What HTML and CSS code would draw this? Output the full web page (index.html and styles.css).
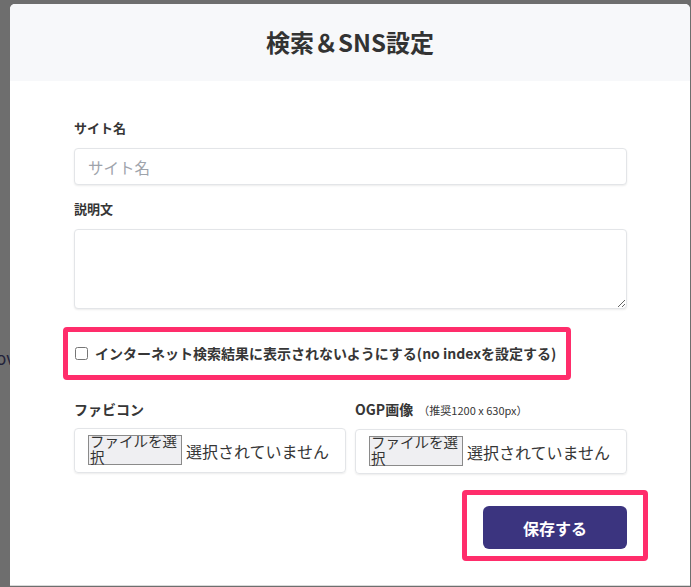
FILE: index.html
```html
<!DOCTYPE html>
<html lang="ja">
<head>
<meta charset="utf-8">
<title>検索＆SNS設定</title>
<link rel="stylesheet" href="styles.css">
</head>
<body>
<span class="behind">ov</span>
<div class="modal">
  <div class="modal-head">
    <h1 class="title">検索＆SNS設定</h1>
  </div>
  <div class="modal-body">
    <div class="field">
      <label class="label">サイト名</label>
      <input class="input" type="text" placeholder="サイト名">
    </div>
    <div class="field">
      <label class="label">説明文</label>
      <textarea class="textarea"></textarea>
    </div>
    <div class="mark check-mark">
      <label class="check">
        <input type="checkbox" class="checkbox">
        <span>インターネット検索結果に表示されないようにする(no indexを設定する)</span>
      </label>
    </div>
    <div class="files">
      <div class="file-field">
        <div class="label">ファビコン</div>
        <div class="file-box">
          <span class="file-btn"><span class="file-btn-text">ファイルを選択</span></span>
          <span class="file-none">選択されていません</span>
        </div>
      </div>
      <div class="file-field">
        <div class="label">OGP画像 <span class="hint">（推奨1200 x 630px）</span></div>
        <div class="file-box">
          <span class="file-btn"><span class="file-btn-text">ファイルを選択</span></span>
          <span class="file-none">選択されていません</span>
        </div>
      </div>
    </div>
    <div class="actions">
      <div class="mark save-mark">
        <button class="save" type="button">保存する</button>
      </div>
    </div>
  </div>
</div>
</body>
</html>
```

FILE: styles.css
```css
* { box-sizing: border-box; }
html, body { margin: 0; padding: 0; }
body {
  width: 691px;
  height: 587px;
  overflow: hidden;
  background: #6e6e6e;
  font-family: "Noto Sans CJK JP", "Noto Sans", sans-serif;
  color: #363636;
  position: relative;
}
.behind {
  position: absolute;
  left: -4px;
  top: 345px;
  font-size: 17px;
  color: #22223a;
}
.modal {
  position: relative;
  margin: 4px 0 0 10px;
  width: 680px;
  height: 582px;
  background: #fff;
  border-radius: 5px 5px 0 0;
  border-bottom: 1px solid #d9d9d9;
  overflow: hidden;
}
.modal-head {
  height: 77px;
  background: #f7f8fa;
  display: flex;
  align-items: center;
  justify-content: center;
}
.title {
  margin: 0;
  font-size: 24px;
  font-weight: 700;
  color: #333;
  line-height: 1;
  padding-bottom: 1px;
}
.modal-body {
  padding: 37px 63px 0 64px;
}
.field { display: flex; flex-direction: column; }
.field + .field { margin-top: 14px; }
.label {
  font-size: 13px;
  font-weight: 700;
  line-height: 20px;
  color: #363636;
  margin-bottom: 10px;
}
.hint {
  font-size: 11px;
  font-weight: 400;
  margin-left: 2px;
}
.input, .textarea {
  width: 553px;
  border: 1px solid #e3e5e8;
  border-radius: 4px;
  box-shadow: 0 1px 2px rgba(0,0,0,0.08);
  font-family: inherit;
  background: #fff;
  outline: none;
}
.input {
  height: 37px;
  padding: 0 13px;
  font-size: 15.5px;
  color: #333;
}
.input::placeholder { color: #9ea3ab; }
.textarea {
  height: 80px;
  resize: vertical;
  display: block;
}
.mark {
  border: 5px solid #ff2d6b;
  border-radius: 4px;
}
.check-mark {
  margin: 18px 0 0 -11px;
  width: 508px;
  height: 53px;
  padding: 11px 0 0 7px;
}
.check {
  display: flex;
  align-items: center;
  gap: 7px;
  font-size: 14px;
  font-weight: 700;
  line-height: 20px;
  color: #363636;
  white-space: nowrap;
}
.checkbox {
  margin: 0;
  width: 13px;
  height: 13px;
}
.files {
  margin-top: 19px;
  display: grid;
  grid-template-columns: 272px 272px;
  column-gap: 9px;
}
.file-field .label {
  font-size: 14px;
  margin-bottom: 9px;
}
.file-field .label .hint { font-size: 11px; }
.file-box {
  height: 45px;
  border: 1px solid #e3e5e8;
  border-radius: 4px;
  box-shadow: 0 1px 2px rgba(0,0,0,0.08);
  display: flex;
  align-items: center;
  padding-left: 13px;
  gap: 4px;
}
.file-btn {
  width: 94px;
  height: 30px;
  border: 1px solid #8a8a8a;
  background: #efeff2;
  font-size: 14.5px;
  line-height: 16px;
  color: #333;
  overflow: visible;
  flex: none;
  margin-top: -1px;
}
.file-btn-text {
  display: block;
  margin-top: -3px;
  padding-left: 1px;
}
.file-none {
  font-size: 16px;
  color: #363636;
  white-space: nowrap;
}
.actions {
  display: flex;
  justify-content: flex-end;
  margin: 16px -21px 0 0;
}
.save-mark {
  padding: 11px 16px 7px 16px;
}
.save {
  display: block;
  width: 144px;
  height: 43px;
  background: #3b347f;
  color: #fff;
  border: none;
  border-radius: 6px;
  font-family: inherit;
  font-size: 16px;
  font-weight: 700;
}
```
